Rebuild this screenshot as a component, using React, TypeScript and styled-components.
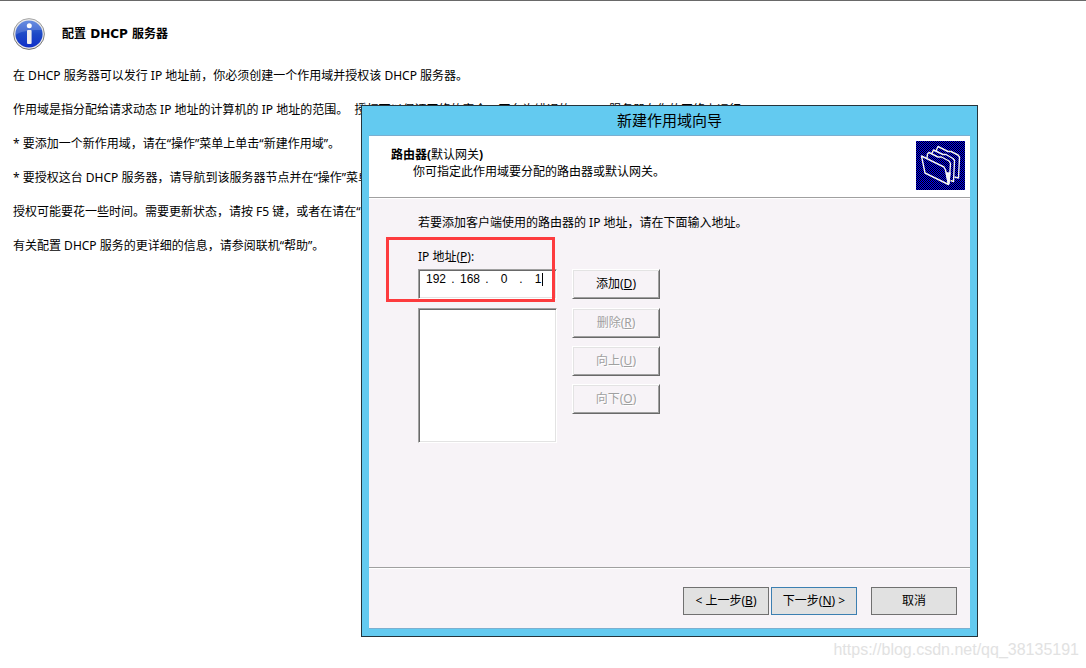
import React from 'react';
import styled, { createGlobalStyle, css } from 'styled-components';

const Global = createGlobalStyle`
  * { box-sizing: border-box; }
  body {
    margin: 0;
    background: #fff;
    color: #000;
    font: 12px/18px "Noto Sans", "Noto Sans CJK SC", sans-serif;
  }
  button, input, select { font: inherit; color: inherit; }
`;

const Page = styled.div`
  position: relative;
  min-height: 100vh;
  border-top: 1px solid #696969;
  overflow: hidden;
`;

const Guide = styled.main`
  display: flex;
  flex-direction: column;
  gap: 16px;
  padding: 17px 13px;
  white-space: nowrap;
`;

const GuideHeader = styled.header`
  display: flex;
  align-items: center;
  gap: 17px;
  padding-bottom: 1px;
`;

const GuideTitle = styled.h1`
  margin: 0;
  font-family: "DejaVu Sans", "Noto Sans CJK SC", sans-serif;
  font-size: 12px;
  line-height: 18px;
`;

const Paragraph = styled.p`
  margin: 0;
`;

const Dialog = styled.section`
  position: absolute;
  left: 361px;
  top: 104px;
  width: 617px;
  padding: 0 7px 7px;
  border: 1px solid #24343c;
  background: #63caf0;
`;

const TitleBar = styled.h2`
  margin: 0;
  padding: 2px 0 3px;
  font-size: 15px;
  line-height: 24px;
  font-weight: 400;
  text-align: center;
`;

const Client = styled.form`
  display: flex;
  flex-direction: column;
  background: #f7f3f7;
  border: solid #7bafd0;
  border-width: 1px 0;
`;

const Banner = styled.header`
  display: flex;
  justify-content: space-between;
  height: 63px;
  padding: 5px 5px 0 22px;
  background: #fff;
  border-bottom: 1px solid #fff;
  box-shadow: inset 0 -1px #a0a0a0;
`;

const BannerText = styled.div`
  padding-top: 5px;
`;

const BannerTitle = styled.h3`
  margin: 0;
  font-size: 12px;
  line-height: 17px;
  span { font-weight: 400; }
`;

const BannerNote = styled.p`
  margin: 0;
  padding-left: 22px;
  line-height: 17px;
`;

const Body = styled.div`
  min-height: 368px;
  padding: 15px 49px;
`;

const FieldLabel = styled.div`
  margin: 16px 0 3px;
`;

const Fields = styled.div`
  display: grid;
  grid-template-columns: 139px 88px;
  column-gap: 15px;
  row-gap: 9px;
`;

const sunken = css`
  background: #fff;
  border: 1px solid;
  border-color: #a0a0a0 #fff #fff #a0a0a0;
  box-shadow: inset 1px 1px #696969, inset -1px -1px #e3e3e3;
`;

const AddressBox = styled.div`
  ${sunken}
  display: flex;
  align-items: flex-start;
  height: 30px;
  padding: 1px 0 0 5px;
  font-family: "Liberation Sans", sans-serif;
  line-height: 16px;
`;

const OctetCell = styled.span<{ $caret?: boolean }>`
  position: relative;
  display: block;
  width: 24px;
  height: 16px;
  ${p => p.$caret && css`
    &::after {
      content: "";
      position: absolute;
      left: 16px;
      top: 2px;
      width: 1px;
      height: 13px;
      background: #000;
    }
  `}
`;

const Octet = styled.input`
  display: block;
  width: 100%;
  height: 16px;
  padding: 0;
  border: 0;
  outline: 0;
  background: transparent;
  text-align: center;
`;

const Dot = styled.span`
  width: 10px;
  text-align: center;
`;

const AddressList = styled.select`
  ${sunken}
  width: 100%;
  height: 135px;
  border-radius: 0;
  outline: 0;
  overflow: hidden;
`;

const ButtonStack = styled.div`
  display: flex;
  flex-direction: column;
  gap: 8px;
`;

const ClassicButton = styled.button`
  width: 100%;
  height: 30px;
  padding: 0;
  background: #f7f3f7;
  border: 1px solid;
  border-color: #fff #696969 #696969 #fff;
  box-shadow: inset 1px 1px #e3e3e3, inset -1px -1px #a0a0a0;
  &:disabled {
    color: #a0a0a0;
    text-shadow: 1px 1px #fff;
  }
`;

const Footer = styled.footer`
  display: flex;
  justify-content: flex-end;
  gap: 14px;
  padding: 19px 13px 13px;
  border-top: 1px solid #a0a0a0;
  box-shadow: inset 0 1px #fff;
`;

const StepButtons = styled.div`
  display: flex;
  gap: 2px;
`;

const FlatButton = styled.button<{ $primary?: boolean }>`
  width: 86px;
  height: 28px;
  padding: 0;
  background: #e1e1e1;
  border: 1px solid ${p => (p.$primary ? '#3c7fb1' : '#707070')};
`;

const Highlight = styled.div`
  position: absolute;
  left: 24px;
  top: 131px;
  width: 169px;
  height: 65px;
  border: 3px solid #fd3b3e;
  pointer-events: none;
`;

const Watermark = styled.div`
  position: absolute;
  right: 7px;
  bottom: 8px;
  font: 16px/20px "Liberation Sans", sans-serif;
  color: #e2e2e2;
`;

const InfoIcon = () => (
  <svg width="32" height="32" viewBox="0 0 32 32" aria-hidden="true">
    <defs>
      <linearGradient id="ball" x1="0" y1="0" x2="0" y2="1">
        <stop offset="0" stopColor="#4a78dc" />
        <stop offset="0.5" stopColor="#1d49c6" />
        <stop offset="1" stopColor="#1030c8" />
      </linearGradient>
      <linearGradient id="rim" x1="0" y1="0" x2="0" y2="1">
        <stop offset="0" stopColor="#a8a8a8" />
        <stop offset="1" stopColor="#6c6c6c" />
      </linearGradient>
    </defs>
    <circle cx="16" cy="16" r="15.4" fill="#e8e8e8" stroke="url(#rim)" />
    <circle cx="16" cy="16" r="13.6" fill="url(#ball)" />
    <path d="M2.5 17A13.5 13.5 0 0 1 29 12C22 12 10 12 2.5 17Z" fill="#fff" opacity="0.17" />
    <circle cx="16.3" cy="7.7" r="2.5" fill="#fff" />
    <rect x="14" y="12" width="4.6" height="14" rx="1" fill="#f0eeee" />
  </svg>
);

const FoldersIcon = () => (
  <svg width="49" height="49" viewBox="0 0 49 49" aria-hidden="true">
    <defs>
      <pattern id="dither" width="2" height="2" patternUnits="userSpaceOnUse">
        <rect width="2" height="2" fill="#000" />
        <rect width="1" height="1" fill="#00f" />
        <rect x="1" y="1" width="1" height="1" fill="#00f" />
      </pattern>
    </defs>
    <rect width="49" height="49" fill="url(#dither)" shapeRendering="crispEdges" />
    <g fill="none" stroke="#f4f4f4" strokeWidth="1.4" strokeLinejoin="round">
      <path d="M20 10L22 5.5L32 10.5L35 10.5L42 14L43.5 16L42.5 37L38.5 36" />
      <path d="M15.5 13L17.5 9L27 13.5L30 13.5L37 17.5L38.5 19.5L37.5 40.5L34.5 39.5" />
      <path d="M11 17L11.5 13L13 11.5L22 16L25.5 16L33 20L34.5 22.5L33 43" />
      <path d="M5.5 15L9 32L32.5 43.5L29.5 29L28 26Z" />
      <path d="M30.5 32L32.5 43L34 32Z" fill="#f4f4f4" />
    </g>
  </svg>
);

const octets = ['192', '168', '0', '1'];

export default function App() {
  return (
    <>
      <Global />
      <Page>
        <Guide>
          <GuideHeader>
            <InfoIcon />
            <GuideTitle>配置 DHCP 服务器</GuideTitle>
          </GuideHeader>
          <Paragraph>在 DHCP 服务器可以发行 IP 地址前，你必须创建一个作用域并授权该 DHCP 服务器。</Paragraph>
          <Paragraph>
            作用域是指分配给请求动态 IP 地址的计算机的 IP 地址的范围。&nbsp; 授权可以保证网络的安全，不允许错误的 DHCP 服务器在你的网络上运行。
          </Paragraph>
          <Paragraph>* 要添加一个新作用域，请在“操作”菜单上单击“新建作用域”。</Paragraph>
          <Paragraph>* 要授权这台 DHCP 服务器，请导航到该服务器节点并在“操作”菜单上单击“授权”。</Paragraph>
          <Paragraph>授权可能要花一些时间。需要更新状态，请按 F5 键，或者在请在“操作”菜单上单击“刷新”。</Paragraph>
          <Paragraph>有关配置 DHCP 服务的更详细的信息，请参阅联机“帮助”。</Paragraph>
        </Guide>

        <Dialog role="dialog" aria-labelledby="wizard-title">
          <TitleBar id="wizard-title">新建作用域向导</TitleBar>
          <Client onSubmit={e => e.preventDefault()}>
            <Banner>
              <BannerText>
                <BannerTitle>路由器(<span>默认网关</span>)</BannerTitle>
                <BannerNote>你可指定此作用域要分配的路由器或默认网关。</BannerNote>
              </BannerText>
              <FoldersIcon />
            </Banner>
            <Body>
              <Paragraph>若要添加客户端使用的路由器的 IP 地址，请在下面输入地址。</Paragraph>
              <FieldLabel>
                <label id="ip-label" htmlFor="octet-0">IP 地址(<u>P</u>):</label>
              </FieldLabel>
              <Fields>
                <AddressBox role="group" aria-labelledby="ip-label">
                  {octets.map((value, i) => (
                    <React.Fragment key={i}>
                      {i > 0 && <Dot>.</Dot>}
                      <OctetCell $caret={i === 3}>
                        <Octet id={`octet-${i}`} aria-label={`IP 地址 ${i + 1}`} defaultValue={value} maxLength={3} />
                      </OctetCell>
                    </React.Fragment>
                  ))}
                </AddressBox>
                <ClassicButton type="button">添加(<u>D</u>)</ClassicButton>
                <AddressList size={6} aria-label="IP 地址" />
                <ButtonStack>
                  <ClassicButton type="button" disabled>删除(<u>R</u>)</ClassicButton>
                  <ClassicButton type="button" disabled>向上(<u>U</u>)</ClassicButton>
                  <ClassicButton type="button" disabled>向下(<u>O</u>)</ClassicButton>
                </ButtonStack>
              </Fields>
            </Body>
            <Footer>
              <StepButtons>
                <FlatButton type="button">&lt; 上一步(<u>B</u>)</FlatButton>
                <FlatButton type="submit" $primary>下一步(<u>N</u>) &gt;</FlatButton>
              </StepButtons>
              <FlatButton type="button">取消</FlatButton>
            </Footer>
          </Client>
          <Highlight />
        </Dialog>
        <Watermark>https://blog.csdn.net/qq_38135191</Watermark>
      </Page>
    </>
  );
}
